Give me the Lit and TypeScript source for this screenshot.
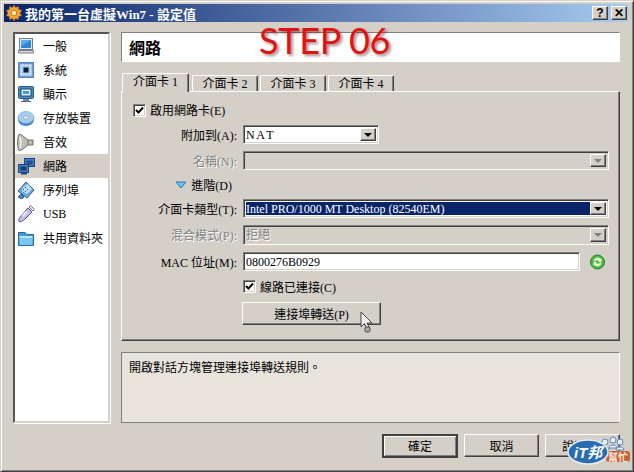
import { LitElement, html, css, svg } from "lit";
import { customElement } from "lit/decorators.js";

const ICONS: Record<string, unknown> = {
  general: svg`<rect x="2.500" y="1.500" width="13" height="11" fill="#e4e8ec" stroke="#6f7f90"/><rect x="4" y="3" width="10" height="8" fill="#2f86d4"/><path d="M4 3h10L4 9z" fill="#5aaeea"/><path d="M1.500 13.500h15v2.500h-15z" fill="#d8dade" stroke="#7c8088"/>`,
  system: svg`<rect x="1.500" y="1.500" width="15" height="15" fill="#6c9bd4" stroke="#5a86c0"/><rect x="3" y="3" width="12" height="12" fill="#a9c8ea"/><rect x="6.500" y="6.500" width="5" height="5" fill="#10213f"/><path d="M4 4.500h10M4 13.500h10M4.500 4v10M13.500 4v10" stroke="#eef5ff" stroke-dasharray="1 1"/>`,
  display: svg`<rect x="1.500" y="1.500" width="15" height="12" rx="1" fill="#4a8cbc" stroke="#2c5c88"/><rect x="4" y="4" width="10" height="7" fill="#e8f4fb" stroke="#164a74"/><rect x="6" y="6" width="6" height="3" fill="#3a9ad8"/><path d="M6 14h6v2H6z" fill="#6c8aa4"/><path d="M4 16.500h10" stroke="#4c6a84"/>`,
  storage: svg`<ellipse cx="9" cy="11" rx="8" ry="6" fill="#4586c8"/><ellipse cx="9" cy="8.500" rx="8" ry="6" fill="#a8cdec" stroke="#6c9cc8" stroke-width=".6"/><ellipse cx="9" cy="8.500" rx="2.500" ry="1.600" fill="#eef6fc" stroke="#6c98c4" stroke-width=".6"/>`,
  audio: svg`<path d="M2 1.500c2 0 3 .5 4 1.500l5 4h5v5h-5l-5 4c-1 1-2 1.500-4 1.500-1-2-1.500-5-1.500-8S1 3.500 2 1.500z" fill="#bdbdb6" stroke="#6f6f68"/><path d="M3 4c1 3 1 8 0 11" fill="none" stroke="#f2f2ee" stroke-width="1.500"/><path d="M11 7v5" stroke="#6f6f68"/>`,
  network: svg`<rect x="7.500" y="1.500" width="10" height="8" fill="#3e7cc4" stroke="#1f477e"/><rect x="9.500" y="3.500" width="6" height="4" fill="#20508f"/><rect x="1.500" y="7.500" width="10" height="8" fill="#3e7cc4" stroke="#1f477e"/><rect x="3.500" y="9.500" width="6" height="4" fill="#173a70"/><path d="M4 16.500h6" stroke="#1f477e" stroke-width="2"/>`,
  serial: svg`<path d="M9 1l8 8-7 8-9-7z" fill="#6fa7de" stroke="#2e5f9e"/><path d="M6 6l5-3 4 5-5 5-5-3z" fill="#bcdcf6"/><path d="M6 8l1 1M8 6l1 1M10 8l1 1M8 10l1 1" stroke="#1f477e"/><path d="M1 16l3-3 3 3-2 2z" fill="#4e86c6" stroke="#2e5f9e"/>`,
  usb: svg`<path d="M11 3l4 4-7 7c-2 2-5 3.500-6 2.500s.5-4 2.500-6z" fill="#c7bce6" stroke="#5d5390"/><path d="M12 2l1.500-1.500 4 4L16 6z" fill="#eeeef6" stroke="#77728f"/><path d="M5.500 11l4-4" stroke="#f5f2ff" stroke-width="2"/>`,
  folder: svg`<path d="M2 3.500h6l2 2h6.500v11H1.500v-13z" fill="#3e9ad6" stroke="#25699f"/><path d="M2.500 7h13v9h-13z" fill="#7cc6ee"/><path d="M2.500 7h13v2h-13z" fill="#b6e2f8"/>`,
};

const ITEMS = [
  ["general", "一般"], ["system", "系統"], ["display", "顯示"], ["storage", "存放裝置"], ["audio", "音效"],
  ["network", "網路"], ["serial", "序列埠"], ["usb", "USB"], ["folder", "共用資料夾"],
];

const check = html`<span class="check"><svg width="9" height="9" viewBox="0 0 9 9"><path d="M1 4l2.500 2.500L8 1.500" fill="none" stroke="#000" stroke-width="2"/></svg></span>`;

@customElement("app-root")
export class AppRoot extends LitElement {
  static styles = css`
    :host { display: block; width: 634px; height: 472px; overflow: hidden; font: 12px "Liberation Serif", "Noto Sans CJK TC", serif; color: #000; }
    * { box-sizing: border-box; }
    .win { position: relative; width: 634px; height: 472px; background: #d4d0c8; border: 1px solid; border-color: #d4d0c8 #404040 #404040 #d4d0c8; box-shadow: inset 1px 1px #fff, inset -1px -1px #808080; padding: 3px 5px 0 3px; }
    .title { height: 18px; background: linear-gradient(90deg, #0a246a, #a6caf0); display: flex; align-items: center; padding: 0 1px 0 2px; color: #fff; font-weight: 700; font-size: 13px; gap: 3px; }
    .title span { flex: 1; white-space: nowrap; }
    .cap { width: 16px; height: 14px; background: #d4d0c8; color: #000; display: flex; align-items: center; justify-content: center; font: 700 12px "Liberation Sans", sans-serif; border: 1px solid; border-color: #fff #404040 #404040 #fff; box-shadow: inset -1px -1px #808080; }
    .body { display: grid; grid-template-columns: 97px 499px; column-gap: 11px; padding: 10px 0 0 9px; }
    .side { height: 391px; background: #fff; border: 2px solid; border-color: #555 #d4d0c8 #d4d0c8 #555; box-shadow: 1px 1px #fff; }
    .item { height: 24px; display: flex; align-items: center; padding-left: 2px; gap: 8px; font-size: 12px; }
    .item svg { flex: none; }
    .item.sel { background: #d4d0c8; }
    .main { display: flex; flex-direction: column; height: 391px; }
    .head { height: 30px; flex: none; background: #fff; border: 1px solid; border-color: #808080 #fff #fff #808080; font-size: 16px; font-weight: 700; display: flex; align-items: center; padding-left: 7px; margin-bottom: 12px; }
    .tabs { display: flex; height: 17px; flex: none; padding-left: 1px; gap: 2px; position: relative; z-index: 1; }
    .tab { width: 66px; height: 16px; margin-top: 1px; border: 1px solid; border-bottom: none; border-color: #fff #404040 #fff #fff; border-radius: 2px 2px 0 0; box-shadow: inset -1px 0 #808080; text-align: center; line-height: 16px; white-space: nowrap; background: #d4d0c8; }
    .tab.on { width: 67px; height: 19px; margin-top: -1px; line-height: 17px; margin-right: 1px; }
    .panel { height: 250px; flex: none; border: 1px solid; border-color: #fff #404040 #404040 #fff; box-shadow: inset -1px -1px #808080; padding: 10px 10px 0 11px; margin-bottom: 11px; display: grid; grid-template-columns: 104px 366px; column-gap: 6px; row-gap: 7px; grid-template-rows: 16px 19px 19px 15px 19px 20px 19px 17px 23px; align-items: center; }
    .label { text-align: right; white-space: nowrap; }
    .off { color: #808080; text-shadow: 1px 1px #fff; }
    .span { grid-column: 1 / 3; }
    .ck { display: flex; align-items: center; gap: 4px; white-space: nowrap; }
    .check { width: 13px; height: 13px; flex: none; background: #fff; border: 1px solid; border-color: #808080 #fff #fff #808080; box-shadow: inset 1px 1px #404040, inset -1px -1px #d4d0c8; display: flex; align-items: center; justify-content: center; }
    .field { height: 100%; display: flex; align-items: center; background: #fff; border: 1px solid; border-color: #808080 #fff #fff #808080; box-shadow: inset 1px 1px #404040, inset -1px -1px #d4d0c8; padding: 2px; }
    .field.dis { background: #d4d0c8; }
    .val { flex: 1; height: 100%; line-height: 14px; white-space: nowrap; overflow: hidden; }
    .nat { width: 136px; letter-spacing: 1.500px; font-kerning: none; }
    .hi { background: #0a246a; color: #fff; }
    .arrow { flex: none; width: 16px; height: 100%; background: #d4d0c8; border: 1px solid; border-color: #fff #404040 #404040 #fff; box-shadow: inset -1px -1px #808080; display: flex; align-items: center; justify-content: center; }
    .arrow i { width: 0; height: 0; border: 4px solid transparent; border-top: 4px solid #000; border-bottom: 0; }
    .arrow.dis i { border-top-color: #808080; }
    .adv { grid-column: 1; display: flex; align-items: center; justify-content: flex-end; gap: 4px; white-space: nowrap; padding-right: 5px; }
    .mac { display: flex; align-items: center; height: 100%; gap: 10px; }
    .mac .field { width: 337px; flex: none; }
    .btn { display: flex; align-items: center; justify-content: center; background: #d4d0c8; border: 1px solid; border-color: #fff #404040 #404040 #fff; box-shadow: inset -1px -1px #808080; white-space: nowrap; }
    .pf { width: 139px; height: 23px; margin-left: -1px; }
    .desc { height: 71px; flex: none; background: #e8e4dc; border: 1px solid; border-color: #808080 #fff #808080 #808080; padding: 5px 7px; white-space: nowrap; }
    .foot { display: flex; justify-content: flex-end; gap: 6px; padding: 11px 8px 0 0; }
    .foot .btn { width: 75px; height: 23px; font-size: 12px; }
    .foot .def { width: 76px; height: 24px; border: 2px solid #404040; box-shadow: inset 1px 1px #fff, inset -1px -1px #808080; }
    .step { position: absolute; left: 258px; top: 17px; font: 400 36px Lato, sans-serif; letter-spacing: -.3px; color: #e21212; text-shadow: 2px 2px 3px rgba(90,30,30,.55); white-space: nowrap; }
    .cursor { position: absolute; left: 358px; top: 310px; }
    .mark { position: absolute; left: 565px; top: 433px; }
  `;

  render() {
    return html`<div class="win">
      <div class="title">
        <svg width="16" height="16" viewBox="0 0 16 16"><path d="M8 0l1.500 2.500 3-1 .2 3 3 .8-1.700 2.700 1.700 2.700-3 .8-.2 3-3-1L8 16l-1.500-2.500-3 1-.2-3-3-.8L2 8 .3 5.300l3-.8.2-3 3 1z" fill="#f2a33a" stroke="#a86a14" stroke-width=".5"/><circle cx="8" cy="8" r="2.800" fill="#ffe9a8" stroke="#b87a1c"/></svg>
        <span>我的第一台虛擬Win7 - 設定值</span>
        <div class="cap">?</div><div class="cap">✕</div>
      </div>
      <div class="body">
        <div class="side">
          ${ITEMS.map(([k, t]) => html`<div class="item ${k === "network" ? "sel" : ""}"><svg width="18" height="18" viewBox="0 0 18 18">${ICONS[k]}</svg><span>${t}</span></div>`)}
        </div>
        <div class="main">
          <div class="head">網路</div>
          <div class="tabs">
            <div class="tab on">介面卡 1</div><div class="tab">介面卡 2</div><div class="tab">介面卡 3</div><div class="tab">介面卡 4</div>
          </div>
          <div class="panel">
            <div class="ck span">${check}<span>啟用網路卡(E)</span></div>
            <div class="label">附加到(A):</div>
            <div class="field nat"><div class="val">NAT</div><div class="arrow"><i></i></div></div>
            <div class="label off">名稱(N):</div>
            <div class="field dis"><div class="val"></div><div class="arrow dis"><i></i></div></div>
            <div class="adv"><svg width="12" height="8" viewBox="0 0 12 8"><path d="M1 1h10L6 7z" fill="#6cc0ec" stroke="#2c78b4"/></svg><span>進階(D)</span></div>
            <div></div>
            <div class="label">介面卡類型(T):</div>
            <div class="field"><div class="val hi">Intel PRO/1000 MT Desktop (82540EM)</div><div class="arrow"><i></i></div></div>
            <div class="label off">混合模式(P):</div>
            <div class="field dis"><div class="val off">拒絕</div><div class="arrow dis"><i></i></div></div>
            <div class="label">MAC 位址(M):</div>
            <div class="mac"><div class="field"><div class="val">0800276B0929</div></div>
              <svg width="15" height="16" viewBox="0 0 15 16"><circle cx="7.500" cy="8" r="7" fill="#4cb848" stroke="#2c7c2c"/><path d="M3.500 7a4 4 0 0 1 7-2l1-1v4H8l1-1a2.500 2.500 0 0 0-4 .5zM11.500 9a4 4 0 0 1-7 2l-1 1V8H7l-1 1a2.500 2.500 0 0 0 4-.5z" fill="#dff5c8"/></svg>
            </div>
            <div></div>
            <div class="ck">${check}<span>線路已連接(C)</span></div>
            <div></div>
            <div class="btn pf">連接埠轉送(P)</div>
          </div>
          <div class="desc">開啟對話方塊管理連接埠轉送規則。</div>
        </div>
      </div>
      <div class="foot">
        <div class="btn def">確定</div><div class="btn">取消</div><div class="btn">說明(H)</div>
      </div>
      <div class="step">STEP 06</div>
      <svg class="cursor" width="16" height="22" viewBox="0 0 16 22"><path d="M2 1v15l3.500-3.500L8 18l2.500-1-2.500-5h5z" fill="#f4f4f4" stroke="#444"/><rect x="6" y="16" width="5" height="5" rx="1.500" fill="#aaa" stroke="#444"/></svg>
      <svg class="mark" width="68" height="37" viewBox="0 0 68 37">
        <g fill="#e8eff7" stroke="#5f86b8" stroke-width="1"><circle cx="39" cy="8" r="3"/><path d="M35 16c0-4 8-4 8 0z"/><circle cx="47" cy="6" r="3"/><path d="M43 14c0-4 8-4 8 0z"/><circle cx="54" cy="8" r="3"/><path d="M50 16c0-4 8-4 8 0z"/></g>
        <rect x="40" y="17" width="24" height="11" rx="3" fill="#c8623a"/>
        <text x="42" y="26.500" font-size="10" font-weight="700" fill="#f6e8d8" font-family="Noto Sans CJK TC, sans-serif">幫忙</text>
        <ellipse cx="22" cy="18" rx="20" ry="12" fill="#2a6cb0" stroke="#e4edf6" stroke-width="1.500"/>
        <text x="8" y="24" font-size="15" font-weight="700" font-style="italic" fill="#fff" font-family="Liberation Sans, Noto Sans CJK TC, sans-serif">iT邦</text>
      </svg>
    </div>`;
  }
}
